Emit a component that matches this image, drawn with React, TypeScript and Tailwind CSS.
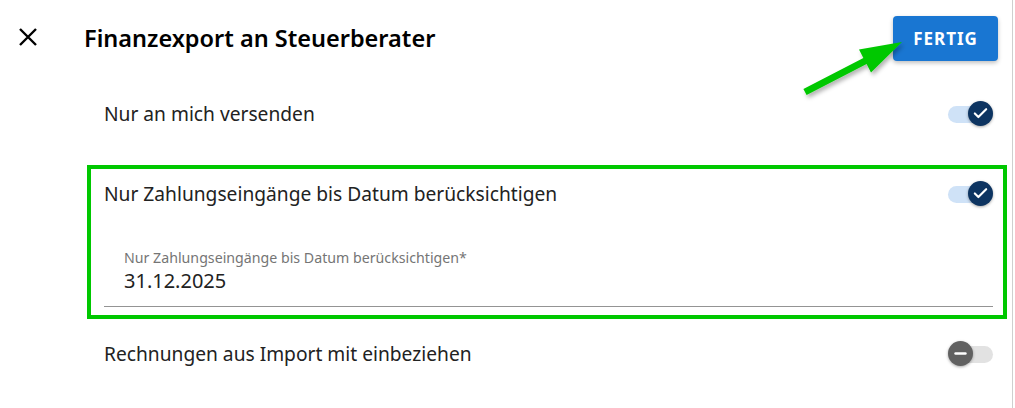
import { Check, Minus } from 'lucide-react';

function Toggle({ on }: { on: boolean }) {
  return (
    <div className="relative w-[45px] h-[26px] flex items-center">
      {on ? (
        <>
          <div className="w-[41px] h-[17px] rounded-full bg-[#cfe2f7]" />
          <div className="absolute right-0 top-0 w-[25px] h-[25px] rounded-full bg-[#0d3461] shadow-[0_1px_3px_rgba(0,0,0,0.35)] flex items-center justify-center">
            <Check size={17} strokeWidth={3} className="text-white" />
          </div>
        </>
      ) : (
        <>
          <div className="ml-[4px] w-[41px] h-[17px] rounded-full bg-[#e2e2e2]" />
          <div className="absolute left-0 top-0 w-[25px] h-[25px] rounded-full bg-[#616161] shadow-[0_1px_3px_rgba(0,0,0,0.35)] flex items-center justify-center">
            <Minus size={17} strokeWidth={3.5} className="text-white" />
          </div>
        </>
      )}
    </div>
  );
}

function SettingRow({ label, on }: { label: string; on: boolean }) {
  return (
    <div className="h-12 flex items-center justify-between">
      <span className="text-[19.2px] text-[#222]">{label}</span>
      <Toggle on={on} />
    </div>
  );
}

export default function App() {
  return (
    <div
      className="relative w-[1015px] h-[408px] bg-white overflow-hidden"
      style={{ fontFamily: '"Noto Sans", "Open Sans", sans-serif' }}
    >
      <div className="w-[1013px] h-full border-r border-[#cfcfcf]">
        <header className="pt-4 h-[61px] flex items-center pl-[19px] pr-[14px]">
          <svg width="18" height="18" viewBox="0 0 18 18" className="mt-[-4px]">
            <path d="M1 1L17 17M17 1L1 17" stroke="#000" strokeWidth="2.4" />
          </svg>
          <h1 className="ml-[47px] text-[23.5px] font-semibold text-black leading-none">
            Finanzexport an Steuerberater
          </h1>
          <button className="ml-auto w-[105px] h-[45px] rounded bg-[#1976d2] text-white text-[17px] font-bold tracking-[1px] shadow-[0_2px_4px_rgba(0,0,0,0.25)]">
            FERTIG
          </button>
        </header>

        <div className="mt-[29px] ml-[104px] w-[889px]">
          <SettingRow label="Nur an mich versenden" on />
        </div>

        <div className="mt-[27px] ml-[87px] w-[920px] border-4 border-[#00c800] pl-[13px] pr-[10px] pt-px pb-2">
          <SettingRow label="Nur Zahlungseingänge bis Datum berücksichtigen" on />
          <div className="mt-[31px] pl-5 pb-[13px] border-b border-[#949494]">
            <div className="text-[14.2px] leading-[18px] text-[#757575]">
              Nur Zahlungseingänge bis Datum berücksichtigen*
            </div>
            <div className="mt-[2px] text-[20px] leading-6 text-[#222]">31.12.2025</div>
          </div>
        </div>

        <div className="mt-[11px] ml-[104px] w-[889px]">
          <SettingRow label="Rechnungen aus Import mit einbeziehen" on={false} />
        </div>
      </div>

      <svg className="absolute left-0 top-0 pointer-events-none" width="1015" height="408">
        <defs>
          <filter id="sh" x="-20%" y="-20%" width="140%" height="140%">
            <feDropShadow dx="2" dy="3" stdDeviation="2" floodColor="#000" floodOpacity="0.3" />
          </filter>
        </defs>
        <polygon
          points="803.4,88.9 863.4,57.9 859,49.4 902,42 871,72.6 866.6,64.1 806.6,95.1"
          fill="#00c800"
          filter="url(#sh)"
        />
      </svg>
    </div>
  );
}
